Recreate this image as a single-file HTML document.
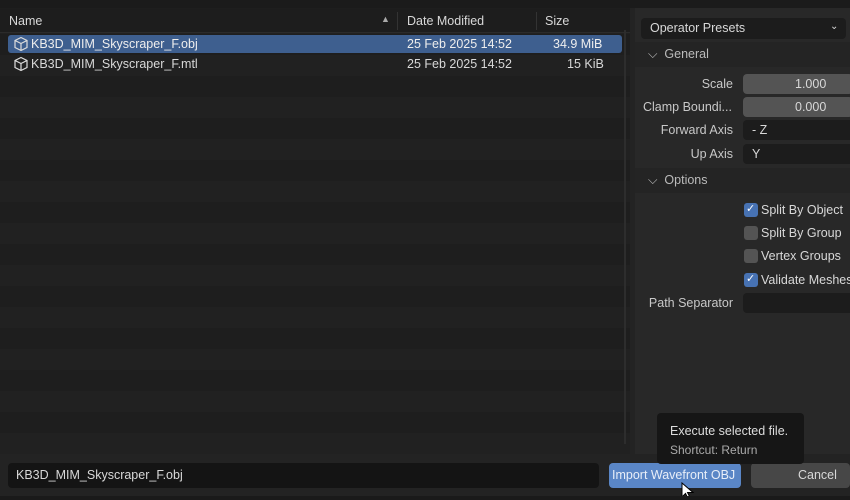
<!DOCTYPE html>
<html><head><style>
*{margin:0;padding:0;box-sizing:border-box}
body{width:850px;height:500px;background:#232323;font-family:"Liberation Sans",sans-serif;font-size:12.5px;color:#d8d8d8;position:relative;overflow:hidden}
.a{position:absolute}
.list{left:0;top:8px;width:630px;height:446px;background:repeating-linear-gradient(#1e1e1e 0 21px,#212121 21px 42px);background-position:0 26px}
.hdr{left:0;top:9px;width:630px;height:24px;background:#1d1d1d;border-bottom:1px solid #2b2b2b}
.t{white-space:nowrap}
.lbl{color:#c8c8c8;text-align:right;width:90px;left:643px}
.fld{left:743px;width:110px;height:20px;border-radius:4px}
.cb{left:744px;width:14px;height:14px;border-radius:3px;background:#545454}
.cb.on{background:#4772b3}
</style></head><body>
<div class="a" style="left:0;top:0;width:850px;height:8px;background:#1b1b1b"></div>
<div class="a list"></div>
<div class="a hdr"></div>
<div class="a t" style="left:9px;top:14px">Name</div>
<div class="a t" style="left:381px;top:14px;font-size:9px;color:#aaa">▲</div>
<div class="a" style="left:397px;top:12px;width:1px;height:18px;background:#333"></div>
<div class="a t" style="left:407px;top:14px">Date Modified</div>
<div class="a" style="left:536px;top:12px;width:1px;height:18px;background:#333"></div>
<div class="a t" style="left:545px;top:14px">Size</div>
<div class="a" style="left:8px;top:35px;width:614px;height:18px;background:#3e5f8f;border-radius:3px"></div>
<svg class="a" style="left:13px;top:36px" width="16" height="16" viewBox="0 0 16 16" fill="none" stroke="#ddd" stroke-width="1.2"><path d="M8 1.5 14 4.5v7L8 14.5 2 11.5v-7z M2 4.5 8 7.5 14 4.5 M8 7.5v7"/></svg>
<svg class="a" style="left:13px;top:56px" width="16" height="16" viewBox="0 0 16 16" fill="none" stroke="#ddd" stroke-width="1.2"><path d="M8 1.5 14 4.5v7L8 14.5 2 11.5v-7z M2 4.5 8 7.5 14 4.5 M8 7.5v7"/></svg>
<div class="a t" style="left:31px;top:37px;color:#eee">KB3D_MIM_Skyscraper_F.obj</div>
<div class="a t" style="left:407px;top:37px;color:#eee">25 Feb 2025 14:52</div>
<div class="a t" style="left:553px;top:37px;color:#eee">34.9 MiB</div>
<div class="a t" style="left:31px;top:57px">KB3D_MIM_Skyscraper_F.mtl</div>
<div class="a t" style="left:407px;top:57px">25 Feb 2025 14:52</div>
<div class="a t" style="left:567px;top:57px">15 KiB</div>
<div class="a" style="left:624px;top:30px;width:2px;height:414px;background:#2d2d2d"></div>
<div class="a" style="left:635px;top:8px;width:215px;height:446px;background:#282828"></div>
<div class="a" style="left:641px;top:18px;width:205px;height:21px;background:#1c1c1c;border-radius:4px"></div>
<div class="a t" style="left:650px;top:21px">Operator Presets</div>
<div class="a t" style="left:830px;top:21px;font-size:10px">⌄</div>
<div class="a" style="left:635px;top:42px;width:215px;height:25px;background:#242424"></div>
<div class="a t" style="left:648px;top:47px;color:#bbb">⌵ &nbsp;General</div>
<div class="a t lbl" style="top:77px">Scale</div>
<div class="a fld" style="top:74px;background:#545454"></div>
<div class="a t" style="left:795px;top:77px">1.000</div>
<div class="a t lbl" style="top:100px;left:643px;width:90px;text-align:left">Clamp Boundi...</div>
<div class="a fld" style="top:97px;background:#545454"></div>
<div class="a t" style="left:795px;top:100px">0.000</div>
<div class="a t lbl" style="top:123px">Forward Axis</div>
<div class="a fld" style="top:120px;background:#1c1c1c"></div>
<div class="a t" style="left:752px;top:123px">- Z</div>
<div class="a t lbl" style="top:147px">Up Axis</div>
<div class="a fld" style="top:144px;background:#1c1c1c"></div>
<div class="a t" style="left:752px;top:147px">Y</div>
<div class="a" style="left:635px;top:168px;width:215px;height:25px;background:#242424"></div>
<div class="a t" style="left:648px;top:173px;color:#bbb">⌵ &nbsp;Options</div>
<div class="a cb on" style="top:203px"></div><div class="a t" style="left:746px;top:202px;font-size:11px;color:#fff">✓</div>
<div class="a t" style="left:761px;top:203px">Split By Object</div>
<div class="a cb" style="top:226px"></div>
<div class="a t" style="left:761px;top:226px">Split By Group</div>
<div class="a cb" style="top:249px"></div>
<div class="a t" style="left:761px;top:249px">Vertex Groups</div>
<div class="a cb on" style="top:273px"></div><div class="a t" style="left:746px;top:272px;font-size:11px;color:#fff">✓</div>
<div class="a t" style="left:761px;top:273px">Validate Meshes</div>
<div class="a t lbl" style="top:296px;left:643px;width:90px">Path Separator</div>
<div class="a fld" style="top:293px;background:#1c1c1c"></div>
<div class="a" style="left:8px;top:463px;width:591px;height:25px;background:#141414;border-radius:4px"></div>
<div class="a t" style="left:16px;top:468px">KB3D_MIM_Skyscraper_F.obj</div>
<div class="a" style="left:609px;top:463px;width:132px;height:25px;background:#5a86c6;border-radius:4px"></div>
<div class="a t" style="left:612px;top:468px;color:#e8eef8">Import Wavefront OBJ</div>
<div class="a" style="left:751px;top:463px;width:99px;height:25px;background:#474747;border-radius:4px"></div>
<div class="a t" style="left:798px;top:468px">Cancel</div>
<div class="a" style="left:657px;top:413px;width:147px;height:51px;background:#161616;border-radius:4px"></div>
<div class="a t" style="left:670px;top:424px;color:#ddd">Execute selected file.</div>
<div class="a t" style="left:670px;top:443px;color:#aaa;font-size:12px">Shortcut: Return</div>
<svg class="a" style="left:681px;top:482px" width="14" height="18" viewBox="0 0 14 18"><path d="M1 1v14l3.5-3.5 3 6 2-1-3-6H12z" fill="#fff" stroke="#000" stroke-width="1"/></svg>
<div class="a" style="left:0;top:496px;width:850px;height:4px;background:#1a1a1a"></div>
</body></html>
